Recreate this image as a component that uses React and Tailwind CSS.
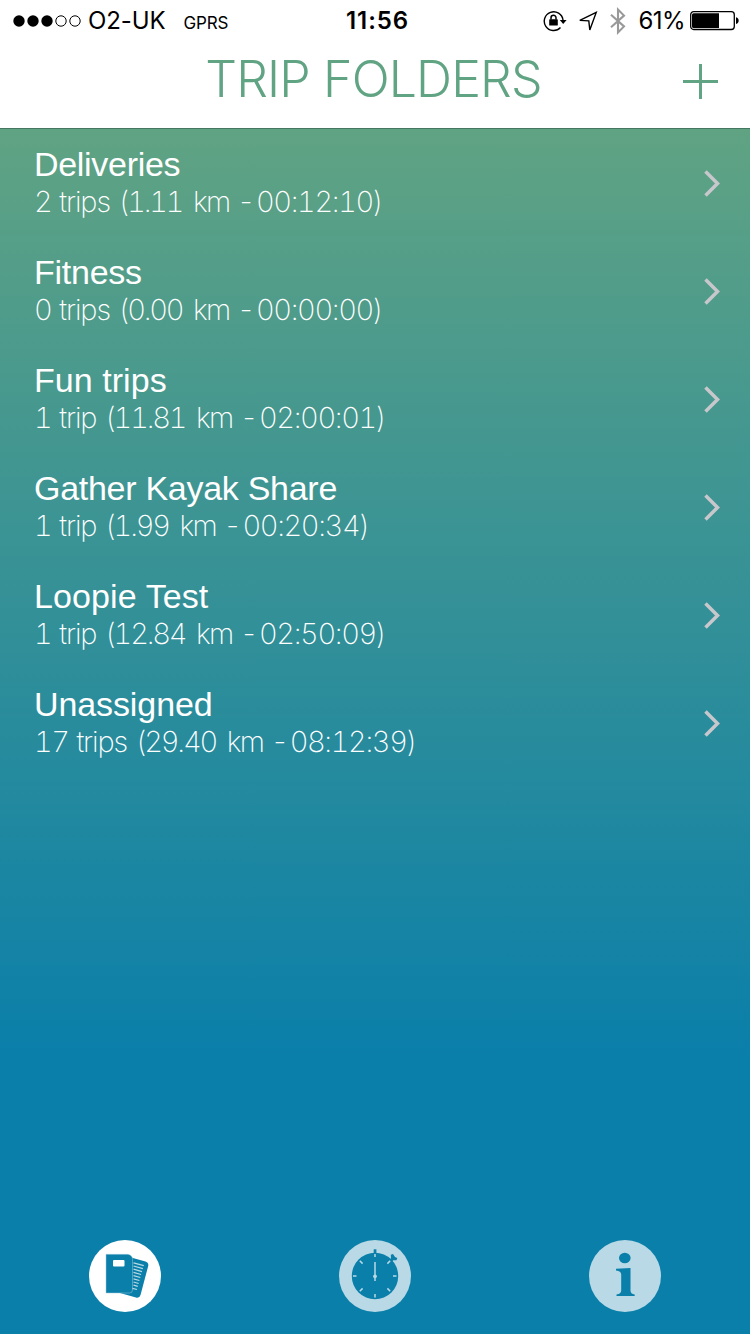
const folders = [
  { name: "Deliveries", count: "2", unit: "trips", distance: "(1.11", time: "00:12:10)", nameTracking: "tracking-[-0.3px]" },
  { name: "Fitness", count: "0", unit: "trips", distance: "(0.00", time: "00:00:00)", nameTracking: "tracking-[-0.25px]" },
  { name: "Fun trips", count: "1", unit: "trip", distance: "(11.81", time: "02:00:01)", nameTracking: "tracking-[0.05px]" },
  { name: "Gather Kayak Share", count: "1", unit: "trip", distance: "(1.99", time: "00:20:34)", nameTracking: "tracking-[-0.28px]" },
  { name: "Loopie Test", count: "1", unit: "trip", distance: "(12.84", time: "02:50:09)", nameTracking: "tracking-[0.1px]" },
  { name: "Unassigned", count: "17", unit: "trips", distance: "(29.40", time: "08:12:39)", nameTracking: "tracking-[-0.1px]" },
];

function SignalDots() {
  return (
    <svg width="68" height="12" viewBox="0 0 68 12">
      {[6, 20, 34].map((x) => (
        <circle key={x} cx={x} cy="6" r="5.7" fill="#000" />
      ))}
      {[48, 62].map((x) => (
        <circle key={x} cx={x} cy="6" r="5.2" fill="none" stroke="#000" />
      ))}
    </svg>
  );
}

function RotationLock() {
  return (
    <svg width="24" height="22" viewBox="0 0 24 22" fill="none" stroke="#000" strokeWidth="1.4">
      <path d="M17.5 17.6 A9.4 9.4 0 1 1 20 10" />
      <path d="M16.8 10h6.800l-3.400 4z" fill="#000" stroke="none" />
      <rect x="6.2" y="9.3" width="8.6" height="6.2" rx="0.6" fill="#000" stroke="none" />
      <path d="M8 9.5V7.8a2.5 2.5 0 0 1 5 0v1.7" strokeWidth="1.5" />
    </svg>
  );
}

function LocationArrow() {
  return (
    <svg width="20" height="21" viewBox="0 0 20 21" fill="none" stroke="#000" strokeWidth="1.4">
      <path d="M18.2 1.4 1.8 9.4l9 .4 1 9.200z" strokeLinejoin="miter" />
    </svg>
  );
}

function Bluetooth() {
  return (
    <svg width="16" height="28" viewBox="0 0 16 28" fill="none" stroke="#999" strokeWidth="2.1">
      <path d="M1 7.8 14 19.4 8 25.4V2.6l6 6L1 20.2" />
    </svg>
  );
}

function Battery() {
  return (
    <svg width="50" height="20" viewBox="0 0 50 20">
      <rect x="0.7" y="0.7" width="43.6" height="17.8" rx="3" fill="none" stroke="#000" strokeWidth="1.3" />
      <path d="M3.6 2.2H29v14.8H3.6a1.6 1.6 0 0 1-1.6-1.6V3.8a1.6 1.6 0 0 1 1.6-1.6z" />
      <path d="M46 6.2c3.6 1 3.6 5.800 0 6.800z" />
    </svg>
  );
}

function FoldersIcon() {
  return (
    <svg width="72" height="72" viewBox="0 0 72 72">
      <circle cx="36" cy="36" r="36" fill="#fff" />
      <path d="M42 17.500 56.500 21.500q3.500 1 2.700 4.500L51.500 55q-1 3.500-4.500 2.600L30 52.800z" fill="#0a7faa" />
      <path d="M17 14.300H39q4.500 1 4.500 5V50q0 3-3 3H17z" fill="#0a7faa" stroke="#9ccbdc" strokeWidth="0.500" />
      <rect x="24" y="20" width="11.500" height="6.500" rx="1" fill="#fff" />
      <g stroke="#b8d9e5" strokeWidth="1.200">
        <path d="M44.500 22.800 54.800 25.600M44.500 26 53.900 28.600M44.500 29.200 53 31.600M44.500 32.400 52.100 34.500M44.500 35.600 51.300 37.500M44.500 38.800 50.400 40.500M44.500 42 49.600 43.500M44.500 45.200 48.800 46.400M43.500 48.300 48 49.500" />
      </g>
    </svg>
  );
}

function StopwatchIcon() {
  return (
    <svg width="72" height="72" viewBox="0 0 72 72">
      <circle cx="36" cy="36" r="36" fill="#b8d9e5" />
      <circle cx="36" cy="36" r="23.2" fill="#0a7faa" />
      <rect x="34.700" y="9.300" width="2.700" height="5" fill="#0a7faa" />
      <path d="M49.500 21 52 18.300 51.800 14.800 54 14 56 17 58.300 18 57.500 20.200 54.300 20.200 51.500 23z" fill="#0a7faa" />
      <g stroke="#b8d9e5" strokeWidth="1.500">
        <path d="M36 14v3M36 54v3.500M14 36h3.500M54 36h3.500M20.800 20.800l2.800 2.800M51.200 20.800l-2.800 2.800M20.800 51.200l2.800-2.800M51.200 51.200l-2.800-2.800" />
        <path d="M36 22v19" />
      </g>
      <circle cx="36" cy="36.300" r="1.900" fill="#b8d9e5" />
    </svg>
  );
}

function InfoIcon() {
  return (
    <svg width="72" height="72" viewBox="0 0 72 72">
      <circle cx="36" cy="36" r="36" fill="#b8d9e5" />
      <ellipse cx="35.800" cy="18" rx="5.800" ry="5.300" fill="#0a7faa" />
      <path d="M27 28.700 41.500 28V50.500q0 3.600 4.200 4V56H27.500v-1.500q4.700-.4 4.700-4V34.500q0-3.500-5.200-4z" fill="#0a7faa" />
    </svg>
  );
}

function StatusBar() {
  return (
    <div className="grid h-10 grid-cols-[1fr_auto_1fr] items-center pt-px font-['Inter',sans-serif] text-black">
      <div className="flex items-center pl-[13px]">
        <SignalDots />
        <span className="ml-[7px] text-[24px] leading-10 tracking-[-0.1px]">O2-UK</span>
        <span className="ml-[18px] pt-1 text-[17px] leading-9 tracking-[-0.2px]">GPRS</span>
      </div>
      <span className="pl-[5px] text-[24px] leading-10 font-semibold tracking-[0.9px]">11:56</span>
      <div className="flex items-center justify-end pr-[10px]">
        <RotationLock />
        <span className="ml-[11px]"><LocationArrow /></span>
        <span className="ml-[12px]"><Bluetooth /></span>
        <span className="ml-[13px] text-[24px] leading-10 tracking-[-0.6px]">61%</span>
        <span className="ml-[5px]"><Battery /></span>
      </div>
    </div>
  );
}

function FolderDetail({ folder }) {
  return (
    <div className="font-['Inter',sans-serif] text-[29px] leading-[37px] font-extralight tracking-[-1.6px] whitespace-nowrap [word-spacing:1.9px] tabular-nums">
      {folder.count} <span className="tracking-[-1.1px]">{folder.unit}</span>{" "}
      <span className="tracking-[-2.2px]">{folder.distance}</span>{" "}
      <span className="ml-[2.5px]">km</span> <span className="-ml-px">-</span>{" "}
      <span className="-ml-[6px] tracking-[-1.4px]">{folder.time}</span>
    </div>
  );
}

export default function App() {
  return (
    <div className="flex h-[1334px] w-[750px] flex-col overflow-hidden bg-[#0a7faa]">
      <header className="h-[129px] border-b border-[#44775f] bg-white">
        <StatusBar />
        <div className="grid h-[88px] grid-cols-[1fr_auto_1fr] text-[#60a483]">
          <h1 className="col-start-2 pr-[3px] font-['Inter',sans-serif] text-[50px] leading-[78px] font-light tracking-[-0.85px] whitespace-nowrap">
            TRIP FOLDERS
          </h1>
          <button aria-label="Add folder" className="mt-6 mr-8 h-[35px] justify-self-end">
            <svg width="35" height="35" viewBox="0 0 35 35" fill="currentColor">
              <path d="M16 0h3v35h-3zM0 16h35v3H0z" />
            </svg>
          </button>
        </div>
      </header>
      <main className="flex-1 bg-[linear-gradient(180deg,#60a383_0px,#0a7faa_930px)]">
        <ul>
          {folders.map((folder) => (
            <li key={folder.name} className="flex h-[108px] items-center justify-between pr-[29px] pl-[34px]">
              <div className="pb-px text-white">
                <div className={`font-['Liberation_Sans',sans-serif] text-[34px] leading-[38px] ${folder.nameTracking}`}>{folder.name}</div>
                <FolderDetail folder={folder} />
              </div>
              <svg width="18" height="27" viewBox="0 0 18 27" fill="none" stroke="#c7c7cc" strokeWidth="3.500">
                <path d="M2.500 1.500 14.500 13.500 2.500 25.500" />
              </svg>
            </li>
          ))}
        </ul>
      </main>
      <nav className="flex h-[94px] justify-between bg-[#0a7faa] px-[89px]">
        <FoldersIcon />
        <StopwatchIcon />
        <InfoIcon />
      </nav>
    </div>
  );
}
